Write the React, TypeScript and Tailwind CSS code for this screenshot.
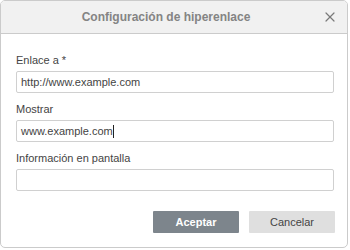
import { X } from 'lucide-react'

const font = { fontFamily: '"Liberation Sans", Arial, sans-serif' }

function Field({ label, value, caret, last }: { label: string; value?: string; caret?: boolean; last?: boolean }) {
  return (
    <div className={last ? '' : 'mb-[10px]'}>
      <div className="text-[11px] leading-[13px] text-[#444] mb-[4px]">{label}</div>
      <div className="h-[22px] border border-[#d0d0d0] rounded-[2px] bg-white flex items-center px-[4px] text-[11px] text-[#444]">
        {value}
        {caret && <span className="inline-block w-px h-[13px] bg-[#222]" />}
      </div>
    </div>
  )
}

export default function App() {
  return (
    <div className="w-[350px] h-[250px] bg-white" style={font}>
      <div className="w-[348px] h-[248px] border border-[#cbcbcb] rounded-[5px] overflow-hidden flex flex-col bg-white">
        <div className="h-[33px] shrink-0 bg-[#f1f1f1] border-b border-[#cbcbcb] relative flex items-center justify-center pr-[16px]">
          <span className="text-[12px] font-bold text-[#848484]">Configuración de hiperenlace</span>
          <X className="absolute right-[9px] top-[8px] w-[16px] h-[16px] text-[#7a7a7a]" strokeWidth={1.8} />
        </div>
        <div className="pt-[20px] pl-[15px] pr-[13px]">
          <Field label="Enlace a *" value="http://www.example.com" />
          <Field label="Mostrar" value="www.example.com" caret />
          <Field label="Información en pantalla" last />
          <div className="flex justify-end gap-[10px] mt-[20px] mr-[-1px]">
            <button className="w-[86px] h-[22px] bg-[#7d858c] text-white text-[11px] font-bold rounded-[1px]">Aceptar</button>
            <button className="w-[86px] h-[22px] bg-[#dfdfdf] text-[#444] text-[11px] rounded-[1px]">Cancelar</button>
          </div>
        </div>
      </div>
    </div>
  )
}
